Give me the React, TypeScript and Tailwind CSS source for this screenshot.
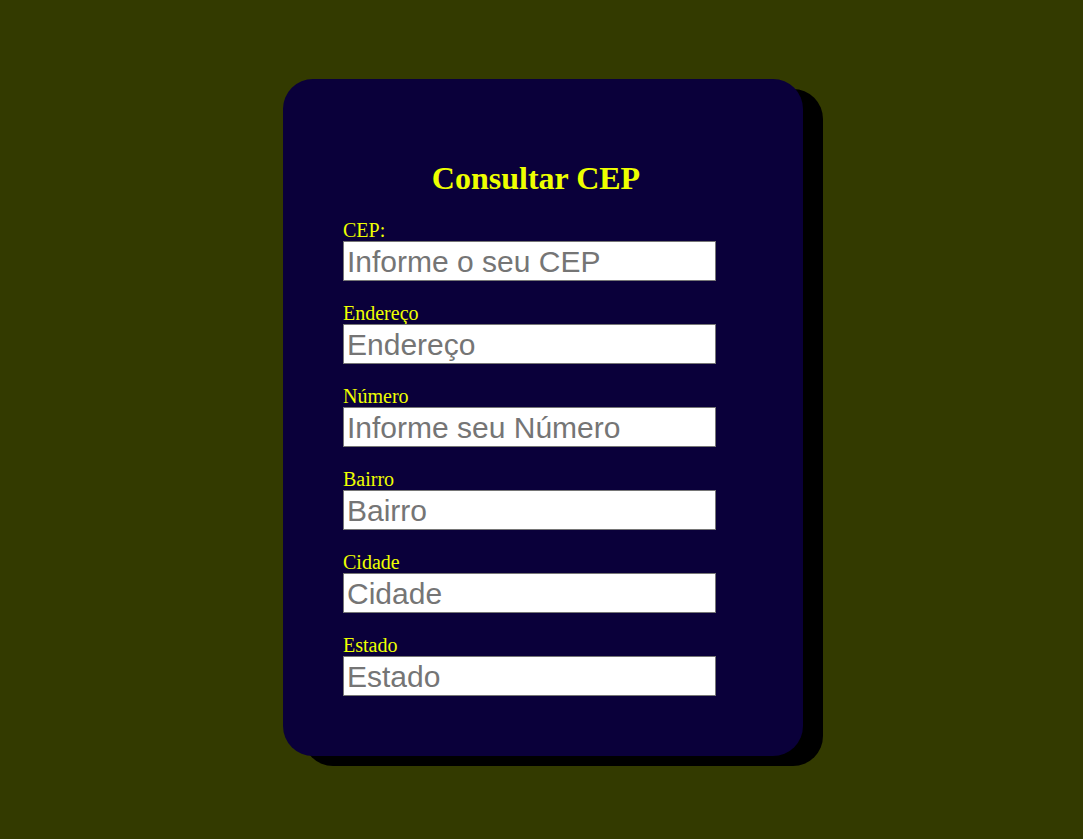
const fields = [
  { label: "CEP:", placeholder: "Informe o seu CEP" },
  { label: "Endereço", placeholder: "Endereço" },
  { label: "Número", placeholder: "Informe seu Número" },
  { label: "Bairro", placeholder: "Bairro" },
  { label: "Cidade", placeholder: "Cidade" },
  { label: "Estado", placeholder: "Estado" },
];

export default function App() {
  return (
    <div className="min-h-screen w-full bg-[#333a00] pt-[79px] font-['Liberation_Serif',serif]">
      <div className="ml-[283px] w-[520px] h-[677px] rounded-[30px] bg-[#0a003a] shadow-[20px_10px_0_#000] pl-[60px] pt-[84px]">
        <h2 className="w-[386px] text-center text-[32px] font-bold text-[#eeff00] leading-[30px] mb-[27px]">
          Consultar CEP
        </h2>
        <form className="flex flex-col gap-[22px]">
          {fields.map((f) => (
            <div key={f.label} className="flex flex-col">
              <label className="text-[20px] leading-[21px] text-[#eeff00]">{f.label}</label>
              <input
                type="text"
                placeholder={f.placeholder}
                className="w-[373px] h-[40px] bg-white border border-[#767676] px-[3px] text-[30px] font-['Liberation_Sans',Arial,sans-serif] text-black placeholder:text-[#757575] outline-none"
              />
            </div>
          ))}
        </form>
      </div>
    </div>
  );
}
